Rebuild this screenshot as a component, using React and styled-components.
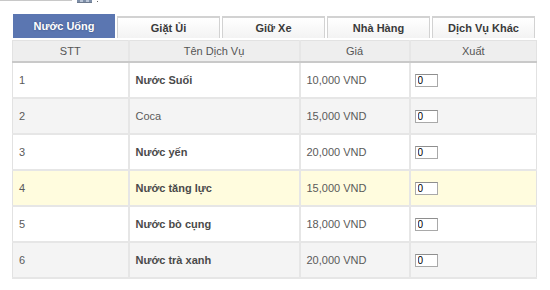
import React from "react";
import styled, { createGlobalStyle } from "styled-components";

const Global = createGlobalStyle`
  html, body { margin: 0; padding: 0; background: #fff; }
  body { font-family: "Liberation Sans", Arial, sans-serif; font-size: 11px; color: #555; }
`;

const Page = styled.div`
  width: 550px;
  height: 290px;
  overflow: hidden;
  position: relative;
`;

const TopStrip = styled.div`
  display: flex;
  align-items: flex-start;
  height: 4px;
`;

const TopLine = styled.div`
  width: 72px;
  height: 1px;
  background: #c8c8c8;
`;

const TopIcon = styled.div`
  margin-left: 5px;
  width: 15px;
  height: 3px;
  background: linear-gradient(90deg, #7e8fa8 0 20%, #b9c4d6 20% 40%, #7e8fa8 40% 60%, #b9c4d6 60% 80%, #7e8fa8 80%);
  border-bottom: 1px solid #6d7a8e;
  box-sizing: border-box;
`;

const TopDot = styled.div`
  margin-left: 5px;
  margin-top: 1px;
  width: 1px;
  height: 1px;
  background: #666;
`;

const Tabs = styled.div`
  display: flex;
  gap: 2px;
  margin: 10px 0 0 13px;
  align-items: flex-end;
  height: 24px;
`;

const Tab = styled.div`
  box-sizing: border-box;
  width: ${(p) => p.$w}px;
  height: ${(p) => (p.$active ? 24 : 22)}px;
  display: flex;
  align-items: center;
  justify-content: center;
  font-weight: bold;
  font-size: 11px;
  color: ${(p) => (p.$active ? "#fff" : "#3a3a3a")};
  background: ${(p) =>
    p.$active ? "#5b76b1" : "linear-gradient(#ffffff, #f3f3f3)"};
  border: ${(p) => (p.$active ? "none" : "1px solid #d2d2d2")};
  border-bottom: none;
  border-top-width: ${(p) => (p.$active ? 0 : 2)}px;
  text-shadow: ${(p) => (p.$active ? "0 0 2px rgba(20,30,60,0.45)" : "none")};
`;

const Table = styled.table`
  margin: 2px 0 0 12px;
  width: 524px;
  border-collapse: collapse;
  table-layout: fixed;
  border: 1px solid #e2e2e2;
`;

const Th = styled.th`
  height: 20px;
  padding: 0;
  background: #eeeeee;
  font-weight: normal;
  color: #555;
  font-size: 11px;
  text-align: center;
  border-left: 2px solid #e6e6e6;
  border-bottom: 2px solid #c9c9c9;
  &:first-child { border-left: none; }
`;

const Tr = styled.tr`
  background: ${(p) => p.$bg};
`;

const Td = styled.td`
  height: 34px;
  padding: 0 0 0 ${(p) => p.$pad ?? 6}px;
  border-left: 2px solid #e6e6e6;
  border-bottom: 2px solid #e6e6e6;
  color: ${(p) => (p.$bold ? "#4a4a4a" : "#5a5a5a")};
  font-weight: ${(p) => (p.$bold ? "bold" : "normal")};
  font-size: 11px;
  &:first-child { border-left: none; }
`;

const Qty = styled.input`
  box-sizing: border-box;
  width: 23px;
  height: 13px;
  padding: 0 0 0 2px;
  margin: 0;
  border: 1px solid #a9a9a9;
  border-top-color: #8e8e8e;
  font-family: "Liberation Sans", Arial, sans-serif;
  font-size: 10px;
  color: #000;
  display: block;
  background: #fff;
`;

const tabs = [
  { label: "Nước Uống", w: 102, active: true },
  { label: "Giặt Ủi", w: 103 },
  { label: "Giữ Xe", w: 103 },
  { label: "Nhà Hàng", w: 103 },
  { label: "Dịch Vụ Khác", w: 103 },
];

const rows = [
  { n: 1, name: "Nước Suối", price: "10,000 VND", bold: true, bg: "#ffffff" },
  { n: 2, name: "Coca", price: "15,000 VND", bold: false, bg: "#f4f4f4" },
  { n: 3, name: "Nước yến", price: "20,000 VND", bold: true, bg: "#ffffff" },
  { n: 4, name: "Nước tăng lực", price: "15,000 VND", bold: true, bg: "#fffcde" },
  { n: 5, name: "Nước bò cụng", price: "18,000 VND", bold: true, bg: "#ffffff" },
  { n: 6, name: "Nước trà xanh", price: "20,000 VND", bold: true, bg: "#f4f4f4" },
];

export default function App() {
  return (
    <Page>
      <Global />
      <TopStrip>
        <TopLine />
        <TopIcon />
        <TopDot />
      </TopStrip>
      <Tabs>
        {tabs.map((t) => (
          <Tab key={t.label} $w={t.w} $active={t.active}>
            {t.label}
          </Tab>
        ))}
      </Tabs>
      <Table>
        <colgroup>
          <col style={{ width: 116 }} />
          <col style={{ width: 171 }} />
          <col style={{ width: 110 }} />
          <col style={{ width: 127 }} />
        </colgroup>
        <thead>
          <tr>
            <Th>STT</Th>
            <Th>Tên Dịch Vụ</Th>
            <Th>Giá</Th>
            <Th>Xuất</Th>
          </tr>
        </thead>
        <tbody>
          {rows.map((r) => (
            <Tr key={r.n} $bg={r.bg}>
              <Td>{r.n}</Td>
              <Td $bold={r.bold}>{r.name}</Td>
              <Td>{r.price}</Td>
              <Td $pad={4}>
                <Qty defaultValue="0" />
              </Td>
            </Tr>
          ))}
        </tbody>
      </Table>
    </Page>
  );
}
